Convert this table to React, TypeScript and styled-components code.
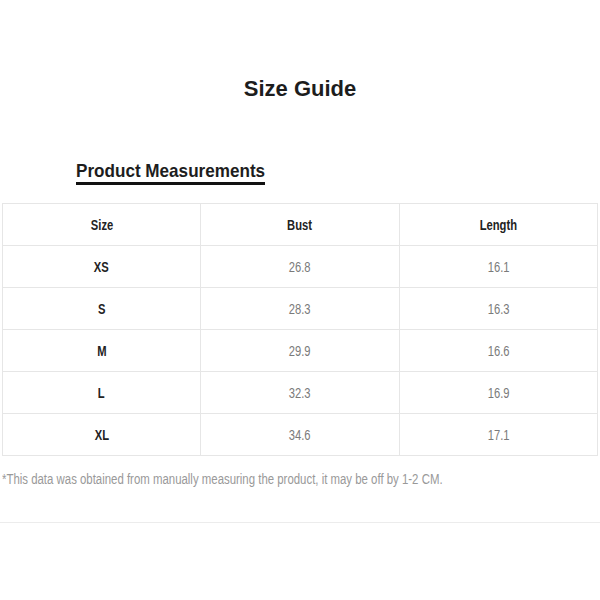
import React from "react";
import styled, { createGlobalStyle } from "styled-components";

const Global = createGlobalStyle`
  html, body { margin: 0; padding: 0; background: #fff; }
  body { font-family: "Liberation Sans", Arial, sans-serif; }
`;

const Page = styled.div`
  width: 600px;
  height: 600px;
  display: flex;
  flex-direction: column;
  padding-top: 74px;
  box-sizing: border-box;
  overflow: hidden;
`;

const Title = styled.h1`
  margin: 0;
  text-align: center;
  font-family: "Liberation Sans", Arial, sans-serif;
  font-weight: 700;
  font-size: 22px;
  line-height: 30px;
  color: #1d1d1d;
`;

const Section = styled.div`
  padding: 56px 0 0 76px;
`;

const SectionTitle = styled.h2`
  display: inline-block;
  margin: 0;
  font-weight: 700;
  font-size: 19px;
  line-height: 22px;
  color: #1d1d1d;
  border-bottom: 3px solid #111;
  transform: scaleX(0.9);
  transform-origin: left center;
`;

const TableWrap = styled.div`
  padding: 18px 2px 0 2px;
`;

const Table = styled.table`
  width: 596px;
  border-collapse: collapse;
  table-layout: fixed;
`;

const Cell = styled.td<{ $head?: boolean }>`
  height: 41px;
  padding: 0;
  border: 1px solid #e6e6e6;
  text-align: center;
  font-size: 14px;
  font-weight: ${(p) => (p.$head ? 700 : 400)};
  color: ${(p) => (p.$head ? "#222" : "#7a7a7a")};
`;

const Narrow = styled.span`
  display: inline-block;
  transform: scaleX(0.8);
  transform-origin: center;
`;

const Note = styled.p`
  margin: 15px 0 0 2px;
  font-size: 14px;
  color: #999;
  white-space: nowrap;
  transform: scaleX(0.815);
  transform-origin: left center;
`;

const Divider = styled.hr`
  margin: 35px 0 0 0;
  border: none;
  border-top: 1px solid #ececec;
`;

const rows = [
  ["XS", "26.8", "16.1"],
  ["S", "28.3", "16.3"],
  ["M", "29.9", "16.6"],
  ["L", "32.3", "16.9"],
  ["XL", "34.6", "17.1"],
];

export default function App() {
  return (
    <Page>
      <Global />
      <Title>Size Guide</Title>
      <Section>
        <SectionTitle>Product Measurements</SectionTitle>
      </Section>
      <TableWrap>
        <Table>
          <tbody>
            <tr>
              <Cell $head><Narrow>Size</Narrow></Cell>
              <Cell $head><Narrow>Bust</Narrow></Cell>
              <Cell $head><Narrow>Length</Narrow></Cell>
            </tr>
            {rows.map((r) => (
              <tr key={r[0]}>
                <Cell $head><Narrow>{r[0]}</Narrow></Cell>
                <Cell><Narrow>{r[1]}</Narrow></Cell>
                <Cell><Narrow>{r[2]}</Narrow></Cell>
              </tr>
            ))}
          </tbody>
        </Table>
      </TableWrap>
      <Note>*This data was obtained from manually measuring the product, it may be off by 1-2 CM.</Note>
      <Divider />
    </Page>
  );
}
